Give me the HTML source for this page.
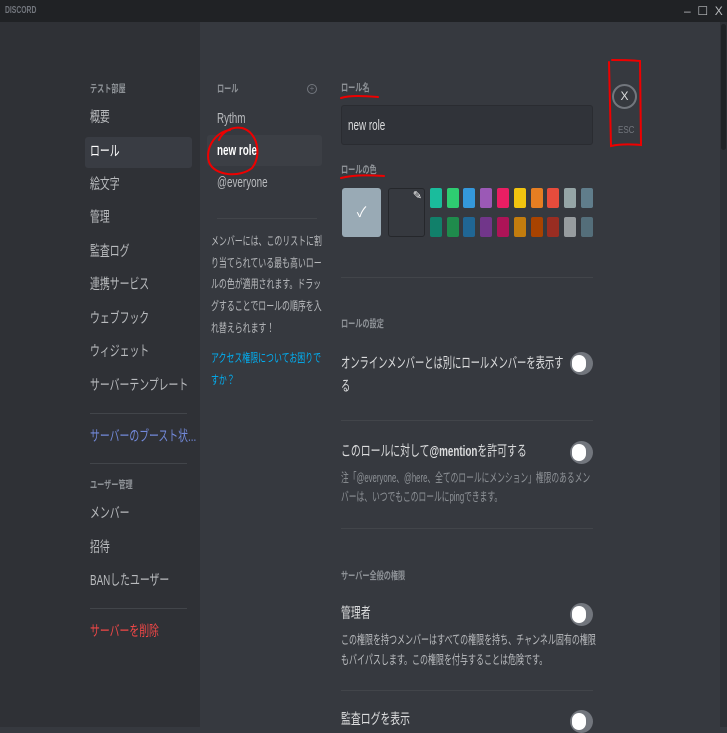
<!DOCTYPE html>
<html><head><meta charset="utf-8"><style>
*{margin:0;padding:0;box-sizing:border-box}
body{width:727px;height:727px;overflow:hidden;background:#36393f;position:relative;font-family:"Liberation Sans","Noto Sans CJK JP",sans-serif;color:#dcddde}
.a{position:absolute;white-space:nowrap;line-height:20px;letter-spacing:0;transform:scaleX(.68);transform-origin:0 0}
.n{font-size:14.5px;color:#b9bbbe}
.h{font-size:10.5px;font-weight:bold;color:#8e9297}
.sep{position:absolute;height:1px;background:#42454a}
.sw{position:absolute;width:12px;height:20px;border-radius:2px}
.tg{position:absolute;width:23px;height:23px;border-radius:12px;background:#72767d}
.tg:after{content:"";position:absolute;left:2px;top:3px;width:14px;height:17px;border-radius:8px;background:#fff}
</style></head><body>
<div style="position:absolute;left:0;top:0;width:727px;height:22px;background:#202225"></div>
<div class="a" style="left:5px;top:1px;font-size:10px;font-weight:bold;color:#72767d">DISCORD</div>
<div class="a" style="left:684px;top:1px;font-size:12px;color:#b9bbbe;transform:none">–&nbsp;&nbsp;☐&nbsp;&nbsp;X</div>
<div style="position:absolute;left:0;top:22px;width:200px;height:705px;background:#2f3136"></div>
<div style="position:absolute;left:720px;top:22px;width:7px;height:705px;background:#2e3035"></div>
<div style="position:absolute;left:721px;top:24px;width:5px;height:126px;border-radius:3px;background:#202225"></div>

<div class="a h" style="left:90px;top:79px">テスト部屋</div>
<div class="a n" style="left:90px;top:108px">概要</div>
<div style="position:absolute;left:85px;top:137px;width:107px;height:31px;background:#393c43;border-radius:3px"></div>
<div class="a n" style="left:90px;top:142px;color:#fff">ロール</div>
<div class="a n" style="left:90px;top:175px">絵文字</div>
<div class="a n" style="left:90px;top:208px">管理</div>
<div class="a n" style="left:90px;top:242px">監査ログ</div>
<div class="a n" style="left:90px;top:275px">連携サービス</div>
<div class="a n" style="left:90px;top:309px">ウェブフック</div>
<div class="a n" style="left:90px;top:342px">ウィジェット</div>
<div class="a n" style="left:90px;top:376px">サーバーテンプレート</div>
<div class="sep" style="left:90px;top:413px;width:97px"></div>
<div class="a n" style="left:90px;top:427px;color:#7289da">サーバーのブースト状...</div>
<div class="sep" style="left:90px;top:463px;width:97px"></div>
<div class="a h" style="left:90px;top:475px">ユーザー管理</div>
<div class="a n" style="left:90px;top:504px">メンバー</div>
<div class="a n" style="left:90px;top:538px">招待</div>
<div class="a n" style="left:90px;top:571px">BANしたユーザー</div>
<div class="sep" style="left:90px;top:608px;width:97px"></div>
<div class="a n" style="left:90px;top:622px;color:#f04747">サーバーを削除</div>

<div class="a h" style="left:217px;top:79px">ロール</div>
<div style="position:absolute;left:307px;top:84px;width:10px;height:10px;border:1px solid #72767d;border-radius:50%;font-size:8px;line-height:8px;text-align:center;color:#72767d">+</div>
<div class="a n" style="left:217px;top:109px">Rythm</div>
<div style="position:absolute;left:207px;top:135px;width:115px;height:31px;background:#3c3f45;border-radius:3px"></div>
<div class="a n" style="left:217px;top:141px;color:#fff;font-weight:bold">new role</div>
<div class="a n" style="left:217px;top:173px">@everyone</div>
<div class="sep" style="left:217px;top:218px;width:100px"></div>
<div class="a" style="left:211px;top:231px;font-size:12px;color:#b9bbbe;line-height:21.7px;transform:scaleX(.66)">メンバーには、このリストに割<br>り当てられている最も高いロー<br>ルの色が適用されます。ドラッ<br>グすることでロールの順序を入<br>れ替えられます！</div>
<div class="a" style="left:211px;top:347px;font-size:12px;color:#00b0f4;line-height:22px;transform:scaleX(.66)">アクセス権限についてお困りで<br>すか？</div>

<div class="a h" style="left:341px;top:78px">ロール名</div>
<div style="position:absolute;left:341px;top:105px;width:252px;height:40px;background:#303339;border:1px solid #2a2c31;border-radius:3px"></div>
<div class="a" style="left:348px;top:116px;font-size:14.5px;color:#dcddde">new role</div>
<div class="a h" style="left:341px;top:160px">ロールの色</div>
<div style="position:absolute;left:342px;top:188px;width:39px;height:49px;background:#99aab5;border-radius:3px;color:#fff;text-align:center;line-height:49px;font-size:14px">✓</div>
<div style="position:absolute;left:388px;top:188px;width:37px;height:49px;border:1px solid #25272b;border-radius:3px;color:#fff;font-size:11px;text-align:right;padding-right:2px">✎</div>
<div class="sw" style="left:430px;top:188px;background:#1abc9c"></div>
<div class="sw" style="left:447px;top:188px;background:#2ecc71"></div>
<div class="sw" style="left:463px;top:188px;background:#3498db"></div>
<div class="sw" style="left:480px;top:188px;background:#9b59b6"></div>
<div class="sw" style="left:497px;top:188px;background:#e91e63"></div>
<div class="sw" style="left:514px;top:188px;background:#f1c40f"></div>
<div class="sw" style="left:531px;top:188px;background:#e67e22"></div>
<div class="sw" style="left:547px;top:188px;background:#e74c3c"></div>
<div class="sw" style="left:564px;top:188px;background:#95a5a6"></div>
<div class="sw" style="left:581px;top:188px;background:#607d8b"></div>
<div class="sw" style="left:430px;top:217px;background:#11806a"></div>
<div class="sw" style="left:447px;top:217px;background:#1f8b4c"></div>
<div class="sw" style="left:463px;top:217px;background:#206694"></div>
<div class="sw" style="left:480px;top:217px;background:#71368a"></div>
<div class="sw" style="left:497px;top:217px;background:#ad1457"></div>
<div class="sw" style="left:514px;top:217px;background:#c27c0e"></div>
<div class="sw" style="left:531px;top:217px;background:#a84300"></div>
<div class="sw" style="left:547px;top:217px;background:#992d22"></div>
<div class="sw" style="left:564px;top:217px;background:#979c9f"></div>
<div class="sw" style="left:581px;top:217px;background:#546e7a"></div>
<div class="sep" style="left:341px;top:277px;width:252px"></div>
<div class="a h" style="left:341px;top:314px">ロールの設定</div>
<div class="a" style="left:341px;top:353px;font-size:14.5px;color:#dcddde;line-height:23px;transform:scaleX(.64)">オンラインメンバーとは別にロールメンバーを表示す<br>る</div>
<div class="tg" style="left:570px;top:352px"></div>
<div class="sep" style="left:341px;top:420px;width:252px"></div>
<div class="a" style="left:341px;top:442px;font-size:14.5px">このロールに対して<b>@mention</b>を許可する</div>
<div class="tg" style="left:570px;top:441px"></div>
<div class="a" style="left:341px;top:469px;font-size:12.5px;color:#8e9297;line-height:19px;transform:scaleX(.62)">注「@everyone、@here、全てのロールにメンション」権限のあるメン<br>バーは、いつでもこのロールにpingできます。</div>
<div class="sep" style="left:341px;top:528px;width:252px"></div>
<div class="a h" style="left:341px;top:566px">サーバー全般の権限</div>
<div class="a" style="left:341px;top:604px;font-size:14.5px">管理者</div>
<div class="tg" style="left:570px;top:603px"></div>
<div class="a" style="left:341px;top:630px;font-size:12.5px;color:#b9bbbe;line-height:20px;transform:scaleX(.64)">この権限を持つメンバーはすべての権限を持ち、チャンネル固有の権限<br>もバイパスします。この権限を付与することは危険です。</div>
<div class="sep" style="left:341px;top:690px;width:252px"></div>
<div class="a" style="left:341px;top:710px;font-size:14.5px">監査ログを表示</div>
<div class="tg" style="left:570px;top:710px"></div>

<div style="position:absolute;left:612px;top:84px;width:25px;height:25px;border:2px solid #72767d;border-radius:50%;color:#dcddde;font-size:12px;text-align:center;line-height:21px">X</div>
<div class="a" style="left:618px;top:121px;font-size:10px;color:#72767d;transform:scaleX(.8)">ESC</div>

<svg style="position:absolute;left:0;top:0" width="727" height="727">
<g fill="none" stroke="#e00" stroke-width="2" stroke-linecap="round">
<path d="M230 130 C214 132 205 150 209 162 C214 176 240 178 252 168 C262 156 258 132 242 128 C232 126 222 132 219 140"/>
<path d="M341 98 C350 95 365 96 378 97"/>
<path d="M341 178 C352 175 370 175 384 176"/>
<path d="M609 62 L611 146 C620 144 630 144 641 145 L640 61 C630 60 620 60 612 60"/>
</g></svg>
</body></html>
